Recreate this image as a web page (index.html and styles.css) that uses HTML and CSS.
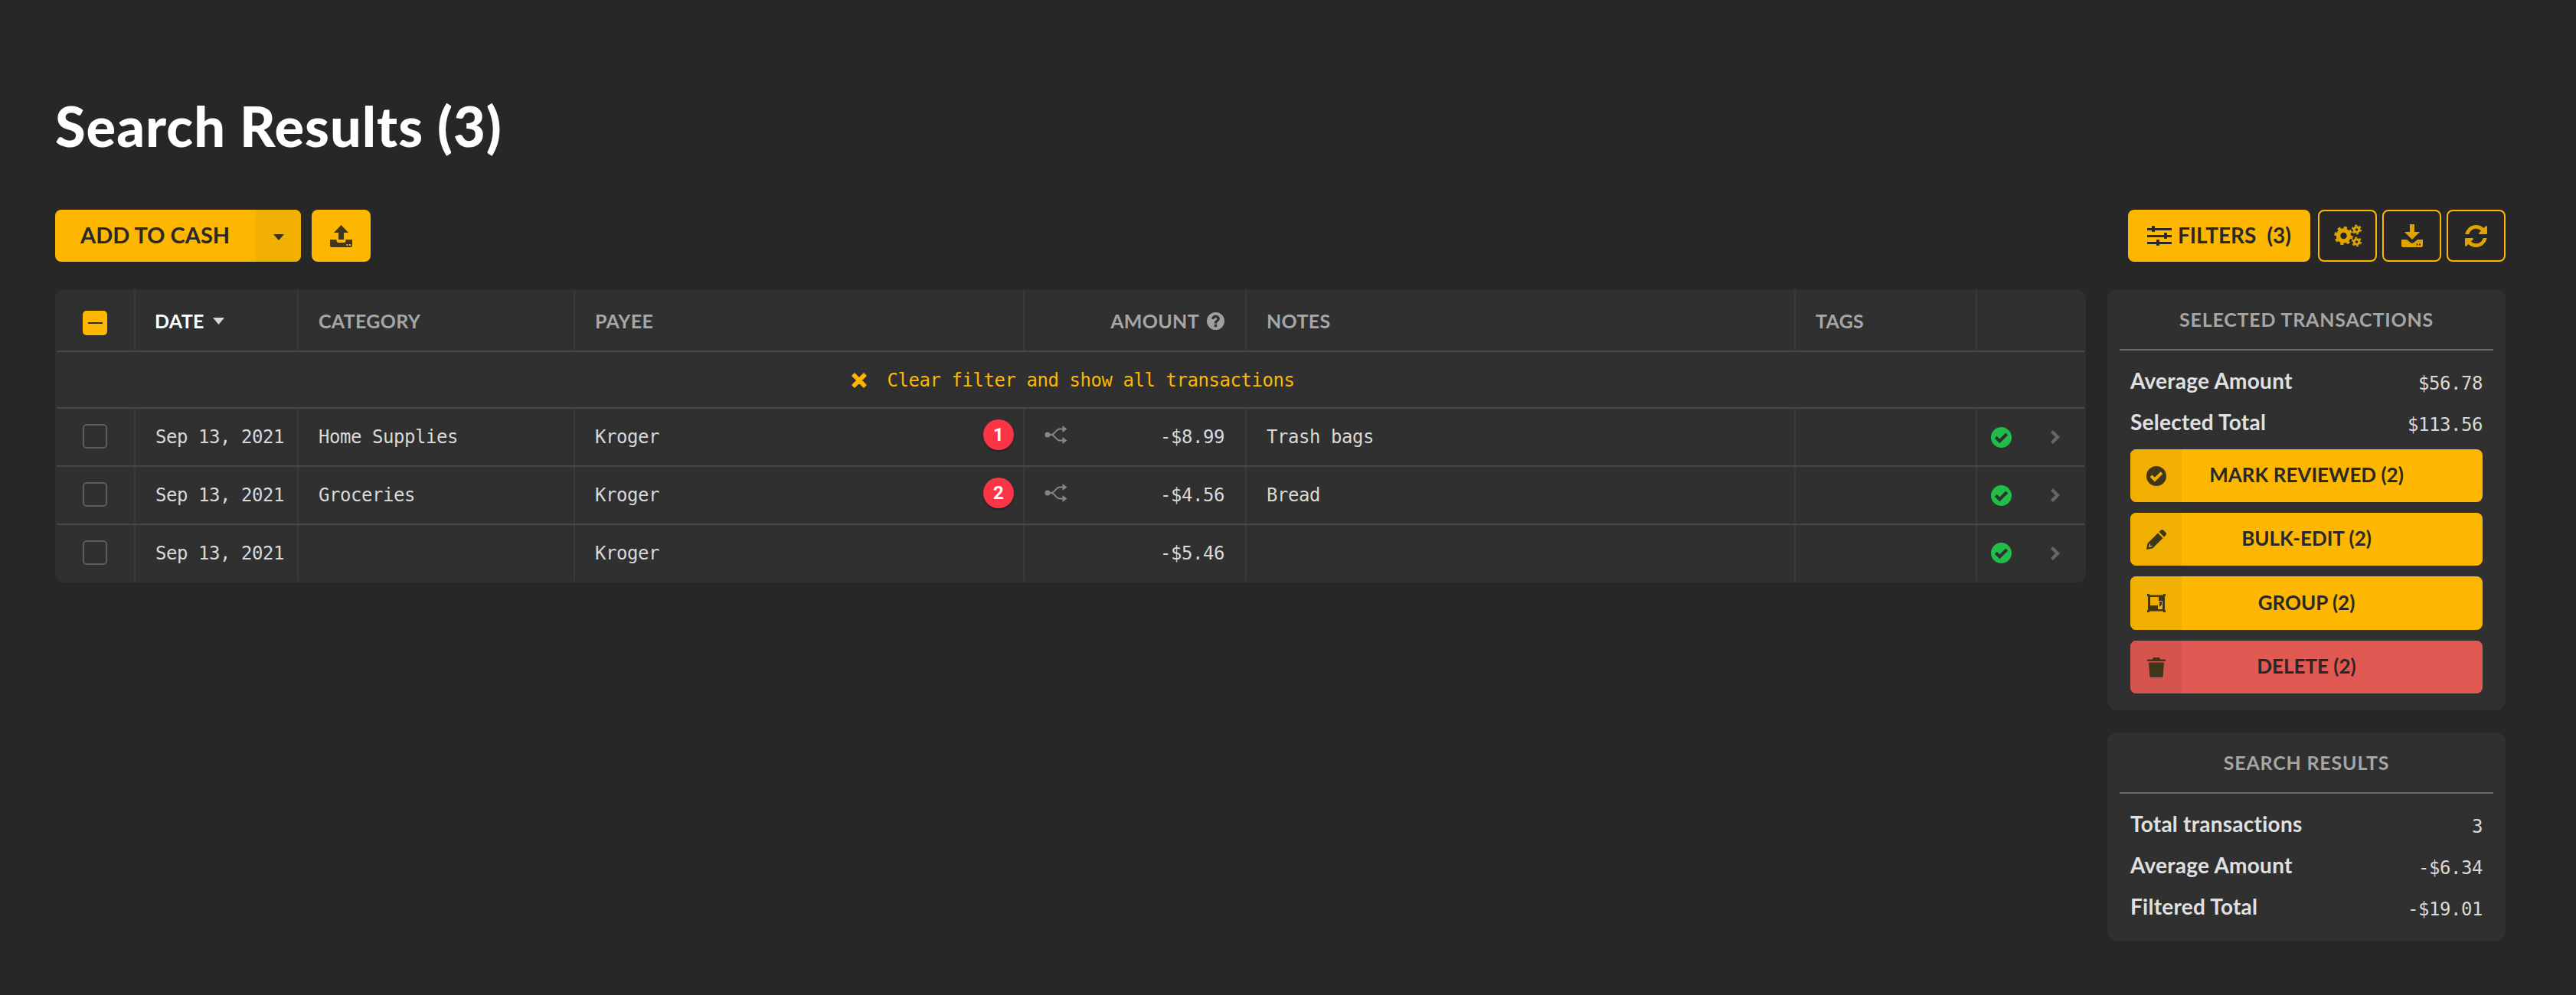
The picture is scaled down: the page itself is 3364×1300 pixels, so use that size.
FILE: index.html
```html
<!DOCTYPE html>
<html lang="en">
<head>
<meta charset="utf-8">
<title>Search Results</title>
<link rel="stylesheet" href="styles.css">
</head>
<body>
<svg class="defs" width="0" height="0" aria-hidden="true">
  <symbol id="i-check" viewBox="0 0 24 24"><path d="M12 0a12 12 0 1 0 0 24a12 12 0 0 0 0-24zM10.100 18.900L4.300 13.100L6.900 10.500L10.100 13.700L17.100 6.700L19.700 9.300z"/></symbol>
  <symbol id="i-fork" viewBox="0 0 30 24"><path d="M4 12H9C13 12 15 4.500 20 4.500H26M9 12C13 12 15 19.500 20 19.500H26" fill="none" stroke="currentColor" stroke-width="2"/><circle cx="4" cy="12" r="3.500" fill="currentColor"/><path d="M23.500 0L29.500 4.500L23.500 9zM23.500 15L29.500 19.500L23.500 24z" fill="currentColor"/></symbol>
  <symbol id="i-chev" viewBox="0 0 12 18"><path d="M3 0L12 9L3 18L0 15L6 9L0 3z" fill="currentColor"/></symbol>
</svg>
<main class="page">
  <h1 class="title">Search Results (3)</h1>
  <div class="toolbar">
    <div class="tools-left">
      <div class="btn-split">
        <span class="split-label">ADD TO CASH</span>
        <span class="split-caret"><svg width="14" height="8" viewBox="0 0 14 8"><path d="M0 0H14L7 8z"/></svg></span>
      </div>
      <div class="btn-icon">
        <svg width="29" height="29" viewBox="0 0 29 29"><path class="dim" d="M14.500 0L24 10H18V19H11V10H5z"/><path class="dim" d="M0 19H8.500V20.500C8.500 22 9.500 23 11 23H18C19.500 23 20.500 22 20.500 20.500V19H29V27C29 28 28 29 27 29H2C1 29 0 28 0 27z"/><rect x="21.500" y="25" width="2" height="2" fill="#fdb700"/><rect x="25" y="25" width="2" height="2" fill="#fdb700"/></svg>
      </div>
    </div>
    <div class="tools-right">
      <div class="btn-filters">
        <svg width="32" height="26" viewBox="0 0 32 26"><path d="M0 3H32V6H0zM0 12H32V15H0zM0 21H32V24H0z"/><rect x="6" y="0" width="4" height="8" rx="1"/><rect x="22" y="9" width="4" height="8" rx="1"/><rect x="12" y="18" width="4" height="8" rx="1"/></svg>
        <span>FILTERS</span><span class="count">(3)</span>
      </div>
      <div class="btn-outline">
        <svg width="36" height="30" viewBox="0 0 36 30"><circle cx="12.500" cy="15" r="7" fill="none" stroke="#e0a400" stroke-width="5.500"/><circle cx="12.500" cy="15" r="10.700" fill="none" stroke="#e0a400" stroke-width="3" stroke-dasharray="4.200 4.200"/><circle cx="29.500" cy="7" r="3.300" fill="none" stroke="#e0a400" stroke-width="3"/><circle cx="29.500" cy="7" r="5.600" fill="none" stroke="#e0a400" stroke-width="1.800" stroke-dasharray="2.900 2.960"/><circle cx="29.500" cy="23" r="3.300" fill="none" stroke="#e0a400" stroke-width="3"/><circle cx="29.500" cy="23" r="5.600" fill="none" stroke="#e0a400" stroke-width="1.800" stroke-dasharray="2.900 2.960"/></svg>
      </div>
      <div class="btn-outline">
        <svg width="28" height="30" viewBox="0 0 28 30"><path fill="#e0a400" d="M11 0H17V10H24L14 20L4 10H11z"/><path fill="#e0a400" d="M0 20H7L12 24C13 25 15 25 16 24L21 20H28V28C28 29 27 30 26 30H2C1 30 0 29 0 28z"/><rect x="19.500" y="25.500" width="2" height="2" fill="#282828"/><rect x="23" y="25.500" width="2" height="2" fill="#282828"/></svg>
      </div>
      <div class="btn-outline">
        <svg width="29" height="29" viewBox="0 0 1536 1536"><path fill="#e0a400" d="M1511 928q0 5-1 7-64 268-268 434.500t-478 166.500q-146 0-282.500-55t-243.500-157l-129 129q-19 19-45 19t-45-19-19-45v-448q0-26 19-45t45-19h448q26 0 45 19t19 45-19 45l-137 137q71 66 161 102t187 36q134 0 250-65t186-179q11-17 53-117 8-23 30-23h192q13 0 22.500 9.500t9.500 22.500zm25-800v448q0 26-19 45t-45 19h-448q-26 0-45-19t-19-45 19-45l138-138q-148-137-349-137-134 0-250 65t-186 179q-11 17-53 117-8 23-30 23h-199q-13 0-22.500-9.500t-9.500-22.500v-7q65-268 270-434.500t480-166.500q146 0 284 55.500t245 156.500l130-129q19-19 45-19t45 19 19 45z"/></svg>
      </div>
    </div>
  </div>
  <div class="content">
    <section class="table">
      <div class="row head">
        <div class="cell center"><span class="box box-on"><i></i></span></div>
        <div class="cell sorted"><span>DATE</span><svg width="15" height="9" viewBox="0 0 15 9"><path d="M0 0H15L7.500 9z" fill="#d8d8d8"/></svg></div>
        <div class="cell">CATEGORY</div>
        <div class="cell">PAYEE</div>
        <div class="cell end"><span>AMOUNT</span><svg class="help" width="23" height="23" viewBox="0 0 24 24"><path fill="#a0a0a0" fill-rule="evenodd" d="M12 0a12 12 0 1 0 0 24a12 12 0 0 0 0-24zM10.200 16.500h3.600v3.500h-3.600zM6.600 9c0-3 2.400-5 5.400-5c3.100 0 5.600 1.900 5.600 4.800c0 3.500-3.800 3.800-3.800 6.200h-3.600c0-3.800 3.600-4.200 3.600-6.100c0-.9-.8-1.500-1.800-1.500s-1.800.7-2.100 2.100z"/></svg></div>
        <div class="cell">NOTES</div>
        <div class="cell">TAGS</div>
        <div class="cell last"></div>
      </div>
      <div class="filter-row">
        <svg width="22" height="22" viewBox="0 0 22 22"><path fill="#fdb700" stroke="#fdb700" stroke-width="1.500" stroke-linejoin="round" d="M5 2L11 8L17 2L20 5L14 11L20 17L17 20L11 14L5 20L2 17L8 11L2 5z"/></svg>
        <span>Clear filter and show all transactions</span>
      </div>
      <div class="row body">
        <div class="cell center"><span class="box"></span></div>
        <div class="cell">Sep 13, 2021</div>
        <div class="cell">Home Supplies</div>
        <div class="cell payee">Kroger<span class="badge">1</span></div>
        <div class="cell amount"><svg class="fork" width="30" height="24"><use href="#i-fork"/></svg><span class="money">-$8.99</span></div>
        <div class="cell">Trash bags</div>
        <div class="cell"></div>
        <div class="cell last"><svg class="ok" width="27" height="27"><use href="#i-check"/></svg><svg class="chev" width="12" height="18"><use href="#i-chev"/></svg></div>
      </div>
      <div class="row body">
        <div class="cell center"><span class="box"></span></div>
        <div class="cell">Sep 13, 2021</div>
        <div class="cell">Groceries</div>
        <div class="cell payee">Kroger<span class="badge">2</span></div>
        <div class="cell amount"><svg class="fork" width="30" height="24"><use href="#i-fork"/></svg><span class="money">-$4.56</span></div>
        <div class="cell">Bread</div>
        <div class="cell"></div>
        <div class="cell last"><svg class="ok" width="27" height="27"><use href="#i-check"/></svg><svg class="chev" width="12" height="18"><use href="#i-chev"/></svg></div>
      </div>
      <div class="row body final">
        <div class="cell center"><span class="box"></span></div>
        <div class="cell">Sep 13, 2021</div>
        <div class="cell"></div>
        <div class="cell payee">Kroger</div>
        <div class="cell amount"><span class="money">-$5.46</span></div>
        <div class="cell"></div>
        <div class="cell"></div>
        <div class="cell last"><svg class="ok" width="27" height="27"><use href="#i-check"/></svg><svg class="chev" width="12" height="18"><use href="#i-chev"/></svg></div>
      </div>
    </section>
    <aside class="side">
      <section class="card">
        <h2 class="card-title">SELECTED TRANSACTIONS</h2>
        <div class="stats">
          <div class="stat"><span>Average Amount</span><b>$56.78</b></div>
          <div class="stat"><span>Selected Total</span><b>$113.56</b></div>
        </div>
        <div class="actions">
          <div class="action">
            <span class="action-icon"><svg class="dim" width="26" height="26"><use href="#i-check"/></svg></span>
            <span class="action-label">MARK REVIEWED (2)</span>
          </div>
          <div class="action">
            <span class="action-icon"><svg width="26" height="26" viewBox="0 0 26 26"><path class="dim" fill-rule="evenodd" d="M19 0.500C20 -.2 21 -.2 22 .5L25.500 4C26.200 5 26.200 6 25.500 7L23 9.500L16.500 3zM15 4.500L21.500 11L8 24.500L0 26L1.500 18zM4 18.500L3 23L7.500 22L7.500 21L5 21L5 18.500z"/></svg></span>
            <span class="action-label">BULK-EDIT (2)</span>
          </div>
          <div class="action tall">
            <span class="action-icon"><svg width="26" height="24" viewBox="0 0 26 24"><path class="dim" fill-rule="evenodd" d="M1 0H4V1.500H22V0H25V3H24V21H25V24H22V22.500H4V24H1V21H2V3H1zM5 4V15H15V20H21V9H16V4zM17 10H20V14L17 17z"/></svg></span>
            <span class="action-label">GROUP (2)</span>
          </div>
          <div class="action danger">
            <span class="action-icon"><svg width="24" height="26" viewBox="0 0 24 26"><path class="dim" d="M8 0H16L17.500 2.500H23C23.600 2.500 24 3 24 3.500V5H0V3.500C0 3 .4 2.500 1 2.500H6.500zM2 6.500H22L20.800 24C20.700 25 20 26 19 26H5C4 26 3.300 25 3.200 24z"/></svg></span>
            <span class="action-label">DELETE (2)</span>
          </div>
        </div>
      </section>
      <section class="card">
        <h2 class="card-title">SEARCH RESULTS</h2>
        <div class="stats stats-end">
          <div class="stat"><span>Total transactions</span><b>3</b></div>
          <div class="stat"><span>Average Amount</span><b>-$6.34</b></div>
          <div class="stat"><span>Filtered Total</span><b>-$19.01</b></div>
        </div>
      </section>
    </aside>
  </div>
</main>
</body>
</html>
```
FILE: styles.css
```css
* { box-sizing: border-box; }
html, body { margin: 0; }
body {
  background: #272727;
  color: #fff;
  font-family: "Lato", "Liberation Sans", sans-serif;
  height: 1300px;
  overflow: hidden;
}
.defs { position: absolute; }
.page { padding: 0 92px 0 72px; }
.title {
  margin: 0;
  padding-top: 122px;
  height: 274px;
  font-size: 72px;
  line-height: 84px;
  letter-spacing: 1px;
  font-weight: 900;
  color: #fff;
}
.toolbar { display: flex; justify-content: space-between; height: 68px; margin-bottom: 36px; }
.tools-left, .tools-right { display: flex; }
.tools-left { gap: 14px; }
.tools-right { gap: 7px; }
.btn-split { display: flex; width: 321px; border-radius: 8px; overflow: hidden; background: #fdb700; color: #282828; font-size: 29px; font-weight: 700; }
.split-label { flex: 1; display: flex; align-items: center; padding: 0 0 3px 33px; }
.split-caret { width: 59px; background: #f1af02; display: flex; align-items: center; justify-content: center; padding-top: 4px; }
.split-caret path { fill: #3d3415; }
.btn-icon { width: 77px; border-radius: 8px; background: #fdb700; display: flex; align-items: center; justify-content: center; }
.dim { fill: #40361a; }
.btn-filters { width: 238px; margin-right: 3px; border-radius: 8px; background: #fdb700; color: #282828; display: flex; align-items: center; justify-content: center; gap: 7px; padding-bottom: 2px; font-size: 28px; font-weight: 700; }
.btn-filters svg { fill: #282828; margin: 2px 1px 0 0; }
.count { margin-left: 7px; }
.btn-outline { width: 77px; border: 2px solid #fdb700; border-radius: 8px; display: flex; align-items: center; justify-content: center; }
.content { display: flex; gap: 28px; align-items: flex-start; }
.table { width: 2652px; height: 383px; padding: 2px; background: #303030; border-radius: 12px; }
.row { display: grid; grid-template-columns: 103px 213px 361px 587px 290px 717px 237px 140px; }
.head { height: 80px; border-bottom: 2px solid #484848; font-size: 25px; letter-spacing: .3px; font-weight: 700; color: #a6a6a6; }
.body { height: 76px; border-bottom: 2px solid #484848; font-family: "DejaVu Sans Mono", monospace; font-size: 24px; letter-spacing: -.45px; color: #d8d8d8; }
.final { height: 73px; border-bottom: 0; }
.filter-row { height: 74px; border-bottom: 2px solid #484848; display: flex; align-items: center; justify-content: center; gap: 26px; padding: 1px 0 0 5px; font-family: "DejaVu Sans Mono", monospace; font-size: 24px; letter-spacing: -.45px; color: #fdb700; }
.cell { display: flex; align-items: center; padding: 0 27px 0 26px; border-right: 2px solid #3a3a3a; min-width: 0; white-space: pre; }
.cell.last { border-right: 0; padding: 0 32px 0 18px; justify-content: space-between; }
.center { justify-content: center; padding: 0 1px 0 0; }
.sorted { color: #fff; gap: 11px; padding-left: 25px; }
.end { justify-content: flex-end; gap: 10px; }
.payee { justify-content: space-between; padding-right: 12px; }
.amount { padding-left: 26px; }
.money { margin-left: auto; }
.box { display: block; width: 32px; height: 32px; margin-bottom: 2px; border: 2px solid #5c5c5c; border-radius: 5px; }
.box-on { margin: 6px 0 0; background: #fdb700; border: 0; display: flex; align-items: center; justify-content: center; }
.box-on i { display: block; width: 19px; height: 2px; background: #282828; }
.badge { width: 40px; height: 40px; margin-bottom: 6px; border-radius: 50%; background: #fb3446; color: #fff; font-family: "Roboto", sans-serif; font-size: 24px; letter-spacing: 0; font-weight: 700; display: flex; align-items: center; justify-content: center; box-shadow: 0 2px 3px rgba(0,0,0,.3); }
.fork { color: #858585; margin-bottom: 6px; }
.ok { fill: #21bc4a; }
.chev { color: #666; }
.side { width: 520px; display: flex; flex-direction: column; gap: 29px; }
.card { background: #303030; border-radius: 12px; padding: 0 16px; }
.card-title { margin: 0; height: 80px; display: flex; align-items: center; justify-content: center; font-size: 25px; letter-spacing: .8px; font-weight: 700; color: #a6a6a6; border-bottom: 2px solid #6a6a6a; }
.stats { padding: 13px 14px 0; }
.stats-end { padding-bottom: 17px; }
.stat { height: 54px; display: flex; justify-content: space-between; align-items: center; font-size: 28px; letter-spacing: .25px; font-weight: 700; color: #e0e0e0; }
.stat span { margin-bottom: 3px; }
.stat b { margin-top: 5px; font-family: "DejaVu Sans Mono", monospace; font-size: 24px; letter-spacing: -.45px; font-weight: 400; color: #d8d8d8; }
.actions { padding: 8px 14px 22px; display: flex; flex-direction: column; gap: 14px; }
.action { height: 69px; border-radius: 8px; overflow: hidden; background: #fdb700; color: #282828; display: flex; font-size: 26px; font-weight: 700; }
.tall { height: 70px; }
.action-icon { width: 67px; background: #f1af02; display: flex; align-items: center; justify-content: center; }
.action-label { flex: 1; display: flex; align-items: center; justify-content: center; padding: 0 67px 3px 0; }
.danger { background: #e05952; }
.danger .action-icon { background: #d5544e; }
```
